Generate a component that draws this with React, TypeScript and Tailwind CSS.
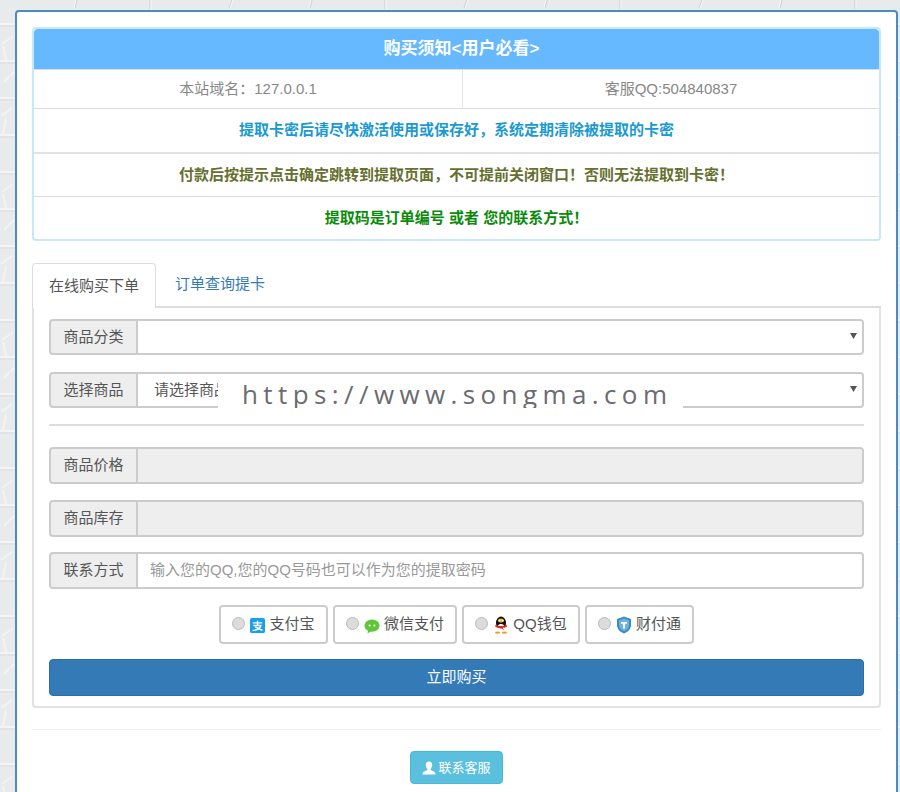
// App.tsx
import type { ReactNode } from "react";

const font = "font-['Liberation_Sans','Noto_Sans_CJK_SC',sans-serif]";

const BrickWall = () => (
  <svg className="absolute inset-0 w-full h-full" aria-hidden="true">
    <defs>
      <pattern id="brick" width="235" height="148" patternUnits="userSpaceOnUse">
        <rect width="235" height="148" fill="#e8ebeb" />
        <path d="M0 24H235M0 61H235M0 98H235M0 135H235" stroke="#f3f5f5" strokeWidth="2" fill="none" />
        <path d="M0 26H235M0 63H235M0 100H235M0 137H235" stroke="#dadede" strokeWidth="1" fill="none" />
        <path d="M77 0L75 8M150 0V9M232 0L229 8" stroke="#c8cccc" strokeWidth="1" fill="none" />
        <path d="M76 0L74 8M151 0V9M233 0L230 8" stroke="#f8f9f9" strokeWidth="1" fill="none" />
        <path d="M2 44L13 36M3 46L6 60M4 82L14 72M1 116L12 108M6 118L3 134" stroke="#f2f4f4" strokeWidth="2" fill="none" />
      </pattern>
    </defs>
    <rect width="100%" height="100%" fill="url(#brick)" />
  </svg>
);

const Alipay = () => (
  <svg viewBox="0 0 16 16" className="w-[15px] h-[15px] mt-[2px] inline-block">
    <rect width="16" height="16" rx="2" fill="#1a9fe8" />
    <path d="M3 5.2H13M8 2.8V8M3.6 8H11.6C10.8 10.8 8 13 2.8 13.4M5.6 9.6C7.6 10.6 10.4 12 13.4 13.2" stroke="#fff" strokeWidth="1.5" fill="none" />
  </svg>
);

const Wechat = () => (
  <svg viewBox="0 0 16 16" className="w-4 h-4 mt-[2px] inline-block">
    <ellipse cx="8" cy="7.6" rx="7.6" ry="6.2" fill="#5fc63b" />
    <path d="M4 12L3.6 15.4L7.4 13Z" fill="#5fc63b" />
    <circle cx="5.6" cy="7.4" r="1" fill="#fff" />
    <circle cx="10.4" cy="7.4" r="1" fill="#fff" />
  </svg>
);

const QQ = () => (
  <svg viewBox="0 0 16 18" className="w-4 h-[18px] inline-block">
    <ellipse cx="8" cy="7" rx="5" ry="6.4" fill="#111" />
    <ellipse cx="8" cy="12" rx="3.6" ry="4" fill="#fff" />
    <path d="M2.6 8.6C5 10.6 11 10.6 13.4 8.6L14 11L9.6 11.8L11 14.4L8.6 12.4C6 12.4 3.8 11.6 2.2 10.8Z" fill="#e2231a" />
    <path d="M5 5.6A3 3 0 0 1 11 5.6L8 6.8Z" fill="#f5a623" />
    <circle cx="6.4" cy="4.4" r="1" fill="#fff" />
    <circle cx="9.6" cy="4.4" r="1" fill="#fff" />
    <ellipse cx="4.6" cy="16.6" rx="2.6" ry="1.2" fill="#f0a020" />
    <ellipse cx="11.4" cy="16.6" rx="2.6" ry="1.2" fill="#f0a020" />
  </svg>
);

const Tenpay = () => (
  <svg viewBox="0 0 16 18" className="w-4 h-[18px] inline-block">
    <path d="M8 .6L15 3V9C15 13 12 16 8 17.4C4 16 1 13 1 9V3Z" fill="#3b8ac4" />
    <path d="M8 2.4L13 4.2V9C13 12 11 14 8 15.2C5 14 3 12 3 9V4.2Z" fill="#6db3e0" />
    <path d="M5 6H11V7.8H9V12.4H7V7.8H5Z" fill="#fff" />
  </svg>
);

const UserIcon = () => (
  <svg viewBox="0 0 14 14" className="w-[14px] h-[14px] inline-block">
    <path d="M7 .4C4.9.4 3.8 2 3.8 4C3.8 5.8 4.6 7.2 5.4 8C5.4 9 4.8 9.4 3.4 10C1.8 10.6.6 11 .4 13.6H13.6C13.4 11 12.2 10.6 10.6 10C9.2 9.4 8.6 9 8.6 8C9.4 7.2 10.2 5.8 10.2 4C10.2 2 9.1.4 7 .4Z" fill="#fff" />
  </svg>
);

const Label = ({ children }: { children: ReactNode }) => (
  <span className="flex items-center justify-center w-[89px] shrink-0 bg-[#eeeeee] border-2 border-[#cccccc] rounded-l text-[15px] text-[#555555]">
    {children}
  </span>
);

const SelectRow = ({ label, value }: { label: string; value?: string }) => (
  <div className="flex h-9">
    <Label>{label}</Label>
    <div className="relative flex-1 min-w-0">
      <select
        defaultValue={value ?? ""}
        className="appearance-none w-full h-9 border-2 border-l-0 border-[#cccccc] rounded-r bg-white pl-4 text-[15px] text-[#555555]"
      >
        <option value={value ?? ""}>{value ?? ""}</option>
      </select>
      <svg viewBox="0 0 7 6" className="absolute right-[7px] top-[14px] w-[7px] h-[6px]">
        <path d="M0 0H7L3.5 6Z" fill="#555555" />
      </svg>
    </div>
  </div>
);

const ReadonlyRow = ({ label }: { label: string }) => (
  <div className="flex h-[37px]">
    <Label>{label}</Label>
    <input disabled className="flex-1 min-w-0 border-2 border-l-0 border-[#cccccc] rounded-r bg-[#eeeeee]" />
  </div>
);

const PayOption = ({ icon, label, width }: { icon: ReactNode; label: string; width: string }) => (
  <label className={`${width} h-[39px] flex items-center justify-center gap-[4px] bg-white border-2 border-[#cccccc] rounded text-[15px] text-[#555555]`}>
    <input type="radio" name="pay" className="appearance-none w-[13px] h-[13px] -mt-[3px] mr-px rounded-full bg-[#dcdcdc] border border-[#bbbbbb]" />
    {icon}
    <span>{label}</span>
  </label>
);

export default function App() {
  return (
    <div className={`relative h-screen overflow-hidden ${font}`}>
      <BrickWall />
      <div className="relative ml-[15px] mr-[2px] mt-[10px] bg-white border-2 border-[#4b8bc4] rounded px-[15px] pt-[15px] pb-10">
        {/* Notice */}
        <div className="border-2 border-[#c6e9f4] rounded bg-white">
          <div className="h-10 flex items-center justify-center pl-[10px] bg-[#66b8ff] rounded-t text-white font-bold text-[17px]">
            购买须知&lt;用户必看&gt;
          </div>
          <div className="flex h-[39px] border-t border-[#dddddd] text-[15px] text-[#888888]">
            <div className="w-[429px] flex items-center justify-center border-r border-[#e5e5e5]">本站域名：127.0.0.1</div>
            <div className="flex-1 flex items-center justify-center">客服QQ:504840837</div>
          </div>
          <div className="h-11 flex items-center justify-center border-t border-[#dddddd] font-bold text-[15px] text-[#1b9ad1]">
            提取卡密后请尽快激活使用或保存好，系统定期清除被提取的卡密
          </div>
          <div className="h-11 flex items-center justify-center border-t-2 border-[#e2e2e2] font-bold text-[15px] text-[#66702f]">
            付款后按提示点击确定跳转到提取页面，不可提前关闭窗口！否则无法提取到卡密！
          </div>
          <div className="h-[43px] flex items-center justify-center border-t border-[#dddddd] font-bold text-[15px] text-[#0a8a0a]">
            提取码是订单编号 或者 您的联系方式！
          </div>
        </div>

        {/* Tabs */}
        <div className="flex mt-[22px] text-[15px] h-[45px] border-b-2 border-[#dddddd]">
          <div className="w-[124px] h-[45px] flex items-center justify-center bg-white border border-b-0 border-[#dddddd] rounded-t text-[#555555]">
            在线购买下单
          </div>
          <div className="w-[128px] flex items-center justify-center text-[#337ab7]">订单查询提卡</div>
        </div>

        {/* Form */}
        <div className="relative border-2 border-t-0 border-[#e2e2e2] rounded-b px-[15px] pt-[11px] pb-[10px]">
          <div className="flex flex-col">
            <SelectRow label="商品分类" />
            <div className="mt-[17px]">
              <SelectRow label="选择商品" value="请选择商品" />
            </div>
            <div className="mt-4 h-[2px] bg-[#dddddd]" />
            <div className="mt-[21px]"><ReadonlyRow label="商品价格" /></div>
            <div className="mt-4"><ReadonlyRow label="商品库存" /></div>
            <div className="mt-[15px] flex h-[37px]">
              <Label>联系方式</Label>
              <input
                placeholder="输入您的QQ,您的QQ号码也可以作为您的提取密码"
                className="flex-1 min-w-0 border-2 border-l-0 border-[#cccccc] rounded-r bg-white pl-3 text-[15px] placeholder:text-[#999999]"
              />
            </div>
            <div className="mt-4 flex justify-center gap-[5px]">
              <PayOption icon={<Alipay />} label="支付宝" width="w-[109px]" />
              <PayOption icon={<Wechat />} label="微信支付" width="w-[124px]" />
              <PayOption icon={<QQ />} label="QQ钱包" width="w-[118px]" />
              <PayOption icon={<Tenpay />} label="财付通" width="w-[109px]" />
            </div>
            <button className="mt-[15px] h-[37px] bg-[#337ab7] border border-[#2e6da4] rounded text-white text-[15px]">
              立即购买
            </button>
          </div>
          {/* watermark strip over the product select */}
          <div className="absolute left-[184px] top-[72px] w-[465px] h-[28px] overflow-hidden bg-white pl-[24px] font-['Open_Sans',sans-serif] text-[26px] leading-[28px] tracking-[5.4px] whitespace-nowrap text-[#6b6b70]">
            https://www.songma.com
          </div>
        </div>

        <div className="mt-[21px] h-px bg-[#eeeeee]" />
        <div className="mt-[21px] flex justify-center">
          <button className="w-[93px] h-[33px] flex items-center justify-center gap-[2px] bg-[#5bc0de] border border-[#46b8da] rounded text-white text-[13px]">
            <UserIcon />
            联系客服
          </button>
        </div>
      </div>
    </div>
  );
}
